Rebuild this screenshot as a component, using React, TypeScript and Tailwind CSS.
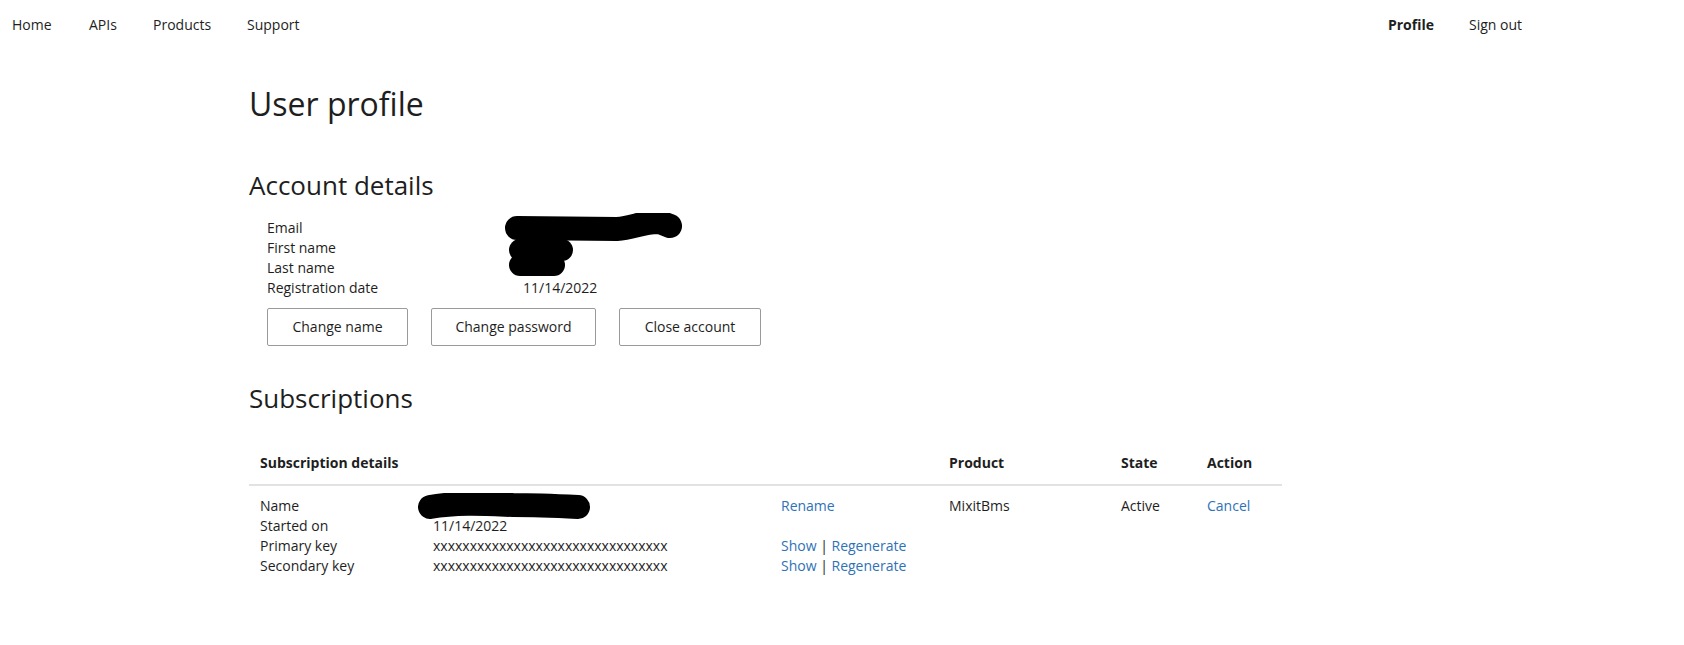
import type { ReactNode } from "react";

const LINK = "text-[#2e72b6]";

function Blob({
  left,
  top,
  w,
  h,
  d,
  sw,
}: {
  left: number;
  top: number;
  w: number;
  h: number;
  d: string;
  sw: number;
}) {
  return (
    <svg
      className="pointer-events-none absolute"
      style={{ left, top }}
      width={w}
      height={h}
      viewBox={`0 0 ${w} ${h}`}
    >
      <path d={d} fill="none" stroke="#000" strokeWidth={sw} strokeLinecap="round" strokeLinejoin="round" />
    </svg>
  );
}

function DetailRow({ label, children }: { label: string; children?: ReactNode }) {
  return (
    <>
      <div>{label}</div>
      <div className="relative">{children}</div>
    </>
  );
}

function Button({ width, children }: { width: string; children: ReactNode }) {
  return (
    <button
      className={`h-[38px] ${width} rounded-[2px] border border-[#9a9a9a] bg-white text-[14px] text-[#1e1e1e]`}
    >
      {children}
    </button>
  );
}

export default function App() {
  return (
    <div className="min-h-[645px] bg-white text-[14px] leading-[20px] text-[#1e1e1e] [font-family:'Open_Sans',sans-serif]">
      <nav className="flex h-[50px] items-center pl-[12px]">
        <div className="flex">
          <a className="w-[77px]">Home</a>
          <a className="w-[64px]">APIs</a>
          <a className="w-[94px]">Products</a>
          <a>Support</a>
        </div>
        <div className="ml-auto mr-[162px] flex">
          <a className="w-[81px] font-bold">Profile</a>
          <a>Sign out</a>
        </div>
      </nav>

      <main className="ml-[249px] w-[1033px]">
        <h1 className="mt-[35px] text-[32px] leading-[38px]">User profile</h1>

        <h2 className="mt-[47px] text-[26px] leading-[31px]">Account details</h2>
        <div className="mt-[17px] pl-[18px]">
          <div className="grid grid-cols-[256px_1fr]">
            <DetailRow label="Email">
              <Blob left={-18} top={-5} w={177} h={30} d="M12 15 L112 16 C128 15 140 8 155 9 L165 13" sw={24} />
              &nbsp;
            </DetailRow>
            <DetailRow label="First name">
              <Blob left={-15} top={0} w={66} h={25} d="M12 12 L54 12" sw={22} />
              &nbsp;
            </DetailRow>
            <DetailRow label="Last name">
              <Blob left={-14} top={-5} w={56} h={25} d="M11 12 L45 12" sw={22} />
              &nbsp;
            </DetailRow>
            <DetailRow label="Registration date">11/14/2022</DetailRow>
          </div>
          <div className="mt-[10px] flex gap-[23px]">
            <Button width="w-[141px]">Change name</Button>
            <Button width="w-[165px]">Change password</Button>
            <Button width="w-[142px]">Close account</Button>
          </div>
        </div>

        <h2 className="mt-[37px] text-[26px] leading-[31px]">Subscriptions</h2>

        <div className="mt-[39px] grid grid-cols-[689px_172px_86px_86px]">
          <div className="px-[11px] pb-[11px] font-bold">Subscription details</div>
          <div className="px-[11px] pb-[11px] font-bold">Product</div>
          <div className="px-[11px] pb-[11px] font-bold">State</div>
          <div className="px-[11px] pb-[11px] font-bold">Action</div>
          <div className="col-span-4 h-[2px] bg-[#e2e2e2]" />

          <div className="px-[11px] pt-[10px]">
            <div className="grid grid-cols-[173px_348px_1fr]">
              <div>Name</div>
              <div className="relative">
                <Blob left={-15} top={-3} w={173} h={27} d="M12 14 C40 9 70 11 95 12 C120 12 140 13 160 14" sw={24} />
                &nbsp;
              </div>
              <div className={LINK}>Rename</div>

              <div>Started on</div>
              <div>11/14/2022</div>
              <div />

              <div>Primary key</div>
              <div>xxxxxxxxxxxxxxxxxxxxxxxxxxxxxxxx</div>
              <div>
                <span className={LINK}>Show</span> | <span className={LINK}>Regenerate</span>
              </div>

              <div>Secondary key</div>
              <div>xxxxxxxxxxxxxxxxxxxxxxxxxxxxxxxx</div>
              <div>
                <span className={LINK}>Show</span> | <span className={LINK}>Regenerate</span>
              </div>
            </div>
          </div>
          <div className="px-[11px] pt-[10px]">MixitBms</div>
          <div className="px-[11px] pt-[10px]">Active</div>
          <div className={`px-[11px] pt-[10px] ${LINK}`}>Cancel</div>
        </div>
      </main>
    </div>
  );
}
